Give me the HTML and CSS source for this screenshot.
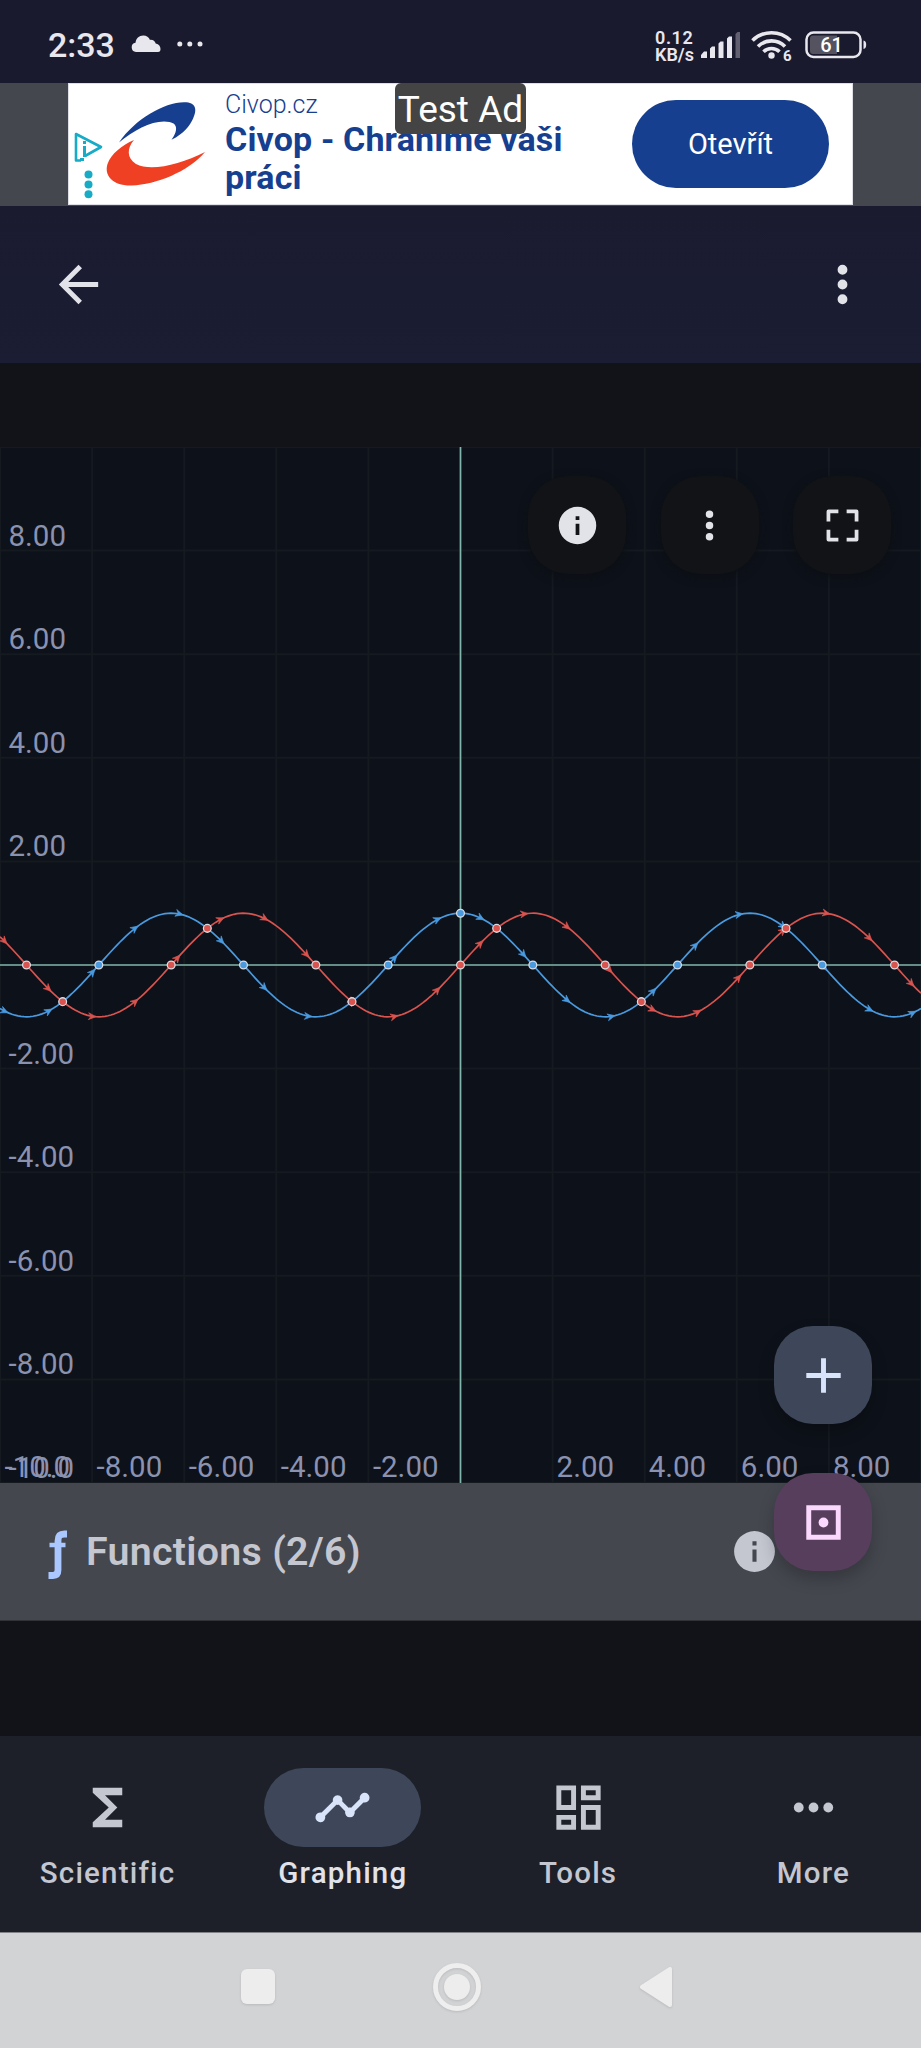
FILE: index.html
```html
<!DOCTYPE html>
<html lang="cs">
<head>
<meta charset="utf-8">
<title>Graphing</title>
<link rel="stylesheet" href="styles.css">
</head>
<body>
<div class="phone">
  <header class="status">
    <div class="status-left">
      <span class="clock">2:33</span>
      <svg class="cloud" width="30" height="18" viewBox="0 0 30 18"><path d="M5 17a4.700 4.700 0 0 1-.5-9.300C5 3.500 8 .5 12.300.5c3.300 0 5.500 1.600 6.700 4.400 3-.3 5 1.200 5.700 3.600C28 9 29.500 11.500 29.500 14c0 2-.7 3-2.500 3z" fill="#e9e7ee"/></svg>
      <svg class="more-dots" width="26" height="6" viewBox="0 0 26 6" fill="#e9e7ee"><circle cx="2.800" cy="3" r="2.500"/><circle cx="12.800" cy="3" r="2.500"/><circle cx="23" cy="3" r="2.500"/></svg>
    </div>
    <div class="status-right">
      <div class="speed"><span class="speed-value">0.12</span><span>KB/s</span></div>
      <svg class="signal" width="40" height="26" viewBox="0 0 40 26" fill="#e9e7ee"><path d="M0 26v-3l3-3.500h3V26zM9 26V16.500l2-2h3V26zM17.500 26V11.500l2-2h3V26zM26 26V6.500l2-2h3V26z"/><path d="M34.500 26V2l2-2h2.500v26z" fill="#626070"/></svg>
      <svg class="wifi" width="42" height="34" viewBox="0 0 42 34" fill="none" stroke="#e9e7ee" stroke-width="3.600"><path d="M1.500 11.500a27 27 0 0 1 38 0M7 17.500a19 19 0 0 1 27 0M12.500 22.800a11.500 11.500 0 0 1 16 0"/><circle cx="20.500" cy="26.500" r="3.200" fill="#e9e7ee" stroke="none"/><text class="wifi-gen" x="32" y="31.500">6</text></svg>
      <svg class="battery" width="62" height="28" viewBox="0 0 62 28"><rect x="1.500" y="1.500" width="54" height="24.500" rx="7" fill="none" stroke="#e9e7ee" stroke-width="2.500"/><path d="M8 4.500h24v18.500H8q-3 0-3-3V7.500q0-3 3-3z" fill="#55535f"/><path d="M58.500 9.500q2.700.5 2.700 4.200t-2.700 4.200z" fill="#e9e7ee"/><text class="battery-text" x="26.500" y="20.500">61</text></svg>
    </div>
  </header>

  <section class="ad-strip">
    <div class="ad">
      <svg class="ad-art" width="150" height="121" viewBox="0 0 150 121">
        <path d="M13 76.500H8V50L33 63 17 72" fill="none" stroke="#17abc6" stroke-width="2.600" stroke-linejoin="round"/>
        <path d="M16.500 62v11M16.500 57v3M12 75.500h4" stroke="#17abc6" stroke-width="3"/>
        <g fill="#17abc6"><circle cx="20.500" cy="90.500" r="4"/><circle cx="20.500" cy="100.500" r="4"/><circle cx="20.500" cy="110.300" r="4"/></g>
        <path d="M51 58.500C67 35 96 18.500 116 18.200c12-.2 13.500 7 9 16.500-3 6.500-9 15-21.500 21 6-8 7-16-2-17.700C87 35 67 45 51 58.500z" fill="#173f90"/>
        <path d="M66 56c-7 8-7.500 18 2 24 15 8 44 .5 69-12-17 20-49 32.500-73 33.500C44 102 36 91 39.500 80 43 70 54 61 66 56z" fill="#f04023"/>
      </svg>
      <div class="ad-copy"><div class="ad-site">Civop.cz</div><div class="ad-title">Civop - Chráníme vaši<br>práci</div></div>
      <div class="ad-button">Otevřít</div>
      <div class="test-label">Test Ad</div>
    </div>
  </section>

  <nav class="appbar">
    <svg width="59" height="59" viewBox="0 0 24 24" fill="#e2e2e9"><path d="M20 11H7.830l5.590-5.590L12 4l-8 8 8 8 1.410-1.410L7.830 13H20z"/></svg>
    <svg width="59" height="59" viewBox="0 0 24 24" fill="#e2e2e9"><path d="M12 8a2 2 0 1 0 0-4 2 2 0 0 0 0 4zm0 2a2 2 0 1 0 0 4 2 2 0 0 0 0-4zm0 6a2 2 0 1 0 0 4 2 2 0 0 0 0-4z"/></svg>
  </nav>

  <main class="content">
    <section class="plot-area">
      <svg id="plot" class="plot" width="921" height="1036" viewBox="0 0 921 1036"></svg>
      <div class="plot-tools">
        <div class="tool"><svg width="45" height="45" viewBox="0 0 24 24" fill="#e2e2e9"><path d="M12 2a10 10 0 1 0 0 20 10 10 0 0 0 0-20zm1 15h-2v-6h2zm0-8h-2V7h2z"/></svg></div>
        <div class="tool"><svg width="45" height="45" viewBox="0 0 24 24" fill="#e2e2e9"><path d="M12 8a2 2 0 1 0 0-4 2 2 0 0 0 0 4zm0 2a2 2 0 1 0 0 4 2 2 0 0 0 0-4zm0 6a2 2 0 1 0 0 4 2 2 0 0 0 0-4z"/></svg></div>
        <div class="tool"><svg width="45" height="45" viewBox="0 0 24 24" fill="none" stroke="#e2e2e9" stroke-width="2" stroke-linejoin="round"><path d="M4.500 9.800V4.500h5.300M14.200 4.500h5.300v5.300M19.500 14.200v5.300h-5.300M9.800 19.500H4.500v-5.300"/></svg></div>
      </div>
    </section>
    <section class="functions">
      <svg class="fx" width="20" height="50" viewBox="0 0 20 50" fill="none" stroke="#aac7ff"><path d="M19 4h-2.500C11.500 4 10 6.500 10 11v29q0 5.500-5 5.500H.5" stroke-width="6.800"/><path d="M1.500 15h16" stroke-width="4.500"/></svg>
      <span class="functions-title">Functions (2/6)</span>
      <svg class="functions-info" width="49" height="49" viewBox="0 0 24 24" fill="#c4c6d0"><path d="M12 2a10 10 0 1 0 0 20 10 10 0 0 0 0-20zm1 15h-2v-6h2zm0-8h-2V7h2z"/></svg>
    </section>
    <div class="fabs">
      <div class="fab fab-add"><svg width="59" height="59" viewBox="0 0 24 24" fill="#d9e3f9"><path d="M19 13h-6v6h-2v-6H5v-2h6V5h2v6h6z"/></svg></div>
      <div class="fab fab-center"><svg width="59" height="59" viewBox="0 0 24 24"><path d="M6 6h12v12H6z" fill="none" stroke="#fad8fd" stroke-width="2"/><circle cx="12" cy="12" r="2" fill="#fad8fd"/></svg></div>
    </div>
  </main>

  <nav class="tabs">
    <div class="tab"><div class="pill"><svg width="59" height="59" viewBox="0 0 24 24" fill="#c4c6d0"><path d="M18 4H6v2l6.500 6L6 18v2h12v-3h-7l5-5-5-5h7z"/></svg></div><span>Scientific</span></div>
    <div class="tab active"><div class="pill"><svg width="59" height="59" viewBox="0 0 24 24" fill="#d9e3f9"><path d="M23 8a2 2 0 0 1-2.490 1.930l-3.560 3.550A2 2 0 1 1 13.080 13.480l-2.560-2.560c-.32.090-.7.090-1.020 0l-4.570 4.560A2 2 0 1 1 3.510 14.070l4.560-4.550A2 2 0 1 1 11.930 9.520l2.560 2.550c.32-.09.700-.09 1.020 0l3.550-3.560A2 2 0 1 1 23 8z"/></svg></div><span>Graphing</span></div>
    <div class="tab"><div class="pill"><svg width="59" height="59" viewBox="0 0 24 24" fill="#c4c6d0"><path d="M19 5v2h-4V5h4M9 5v6H5V5h4m10 8v6h-4v-6h4M9 17v2H5v-2h4M21 3h-8v6h8V3zM11 3H3v10h8V3zm10 8h-8v10h8V11zm-10 4H3v6h8v-6z"/></svg></div><span>Tools</span></div>
    <div class="tab"><div class="pill"><svg width="59" height="59" viewBox="0 0 24 24" fill="#c4c6d0"><circle cx="6" cy="12" r="2"/><circle cx="12" cy="12" r="2"/><circle cx="18" cy="12" r="2"/></svg></div><span>More</span></div>
  </nav>

  <footer class="system">
    <svg width="36" height="37" viewBox="0 0 36 37"><rect x="1" y="1" width="34" height="35" rx="6" fill="#ededed"/></svg>
    <svg width="48" height="48" viewBox="0 0 48 48"><circle cx="24" cy="24" r="21.500" fill="none" stroke="#eeeeee" stroke-width="5"/><circle cx="24" cy="24" r="13" fill="#ededed"/></svg>
    <svg width="34" height="42" viewBox="0 0 34 42"><path d="M31 3v36L3 21z" fill="#ededed" stroke="#ededed" stroke-width="4" stroke-linejoin="round"/></svg>
  </footer>
</div>
<script src="plot.js"></script>
</body>
</html>
```
FILE: styles.css
```css
* { box-sizing: border-box; }
body { margin: 0; background: #111318; font-family: Roboto, "Noto Sans", sans-serif; }
svg { display: block; flex: none; }
.phone { width: 921px; height: 2048px; display: flex; flex-direction: column; overflow: hidden; }

.status { height: 83px; background: #1a1a2e; color: #e9e7ee; display: flex; justify-content: space-between; padding: 0 54px 0 48px; }
.status-left, .status-right { display: flex; align-items: flex-start; }
.clock { font-size: 34px; line-height: 40px; font-weight: 500; margin-top: 25px; width: 66px; white-space: nowrap; }
.cloud { margin: 35px 0 0 17px; }
.more-dots { margin: 41px 0 0 16px; }
.speed { display: flex; flex-direction: column; font-size: 18px; line-height: 17px; font-weight: 600; width: 41px; margin-top: 29px; white-space: nowrap; }
.speed-value { letter-spacing: .6px; }
.signal { margin: 32px 0 0 5px; }
.wifi { margin: 29px 0 0 10px; }
.battery { margin: 31px 0 0 12px; }
.wifi-gen { font-size: 15px; font-weight: 700; fill: #e9e7ee; stroke: #1a1a2e; stroke-width: 3px; paint-order: stroke; }
.battery-text { font-size: 20px; font-weight: 500; fill: #fff; text-anchor: middle; }

.ad-strip { height: 123px; background: #44474e; display: flex; justify-content: center; }
.ad { position: relative; width: 785px; height: 122px; background: #fff; border: 1px solid #dedfe6; display: flex; padding-right: 23px; color: #173f90; }
.ad-art { margin-left: -1px; }
.ad-copy { margin-left: 7px; width: 400px; }
.ad-site { font-size: 25px; font-weight: 300; line-height: 30px; margin-top: 6px; }
.ad-title { font-size: 34px; font-weight: 700; line-height: 38px; letter-spacing: .15px; white-space: nowrap; }
.ad-button { width: 197px; height: 88px; margin: 16px 0 0 auto; border-radius: 44px; background: #173f90; color: #fff; font-size: 29px; display: flex; align-items: center; justify-content: center; }
.test-label { position: absolute; left: 326px; top: -1px; width: 131px; height: 51px; border-radius: 6px; background: #444; color: #fff; font-size: 37px; line-height: 53px; text-align: center; white-space: nowrap; }

.appbar { height: 157px; background: linear-gradient(#1b1b30, #1a1d33); display: flex; align-items: center; justify-content: space-between; padding: 0 49px; }

.content { position: relative; height: 1373px; padding-top: 84px; background: #111318; }
.plot-area { position: relative; height: 1036px; background: #0d1119; }
.plot .grid { stroke: #151a21; stroke-width: 2; }
.plot .axis { stroke: #80b5ab; stroke-width: 1.700; }
.plot .label { fill: #8a92b0; font-size: 29.500px; }
.plot .curve { fill: none; stroke-width: 1.700; }
.plot .dot { stroke: #d8dbe2; stroke-width: 1.300; }
.plot-tools { position: absolute; top: 29px; right: 30px; display: flex; gap: 34.500px; }
.tool { width: 98px; height: 98px; border-radius: 40px; background: #111317; box-shadow: 0 3px 10px #0c0f15; display: flex; align-items: center; justify-content: center; }
.functions { height: 138px; background: #44474e; display: flex; align-items: center; padding: 0 142px 0 48px; border-bottom: 1px solid #303238; }
.fx { margin-top: 7px; }
.functions-title { color: #c4c6d0; font-size: 39.300px; font-weight: 600; letter-spacing: .3px; margin-left: 18px; white-space: nowrap; }
.functions-info { margin-left: auto; }
.fabs { position: absolute; right: 49px; top: 963px; display: flex; flex-direction: column; gap: 49px; }
.fab { width: 98px; height: 98px; border-radius: 39px; display: flex; align-items: center; justify-content: center; box-shadow: 0 8px 16px rgba(0, 0, 0, .22); }
.fab-add { background: #3e4759; }
.fab-center { background: #573e5c; }

.tabs { height: 196px; background: #1d2029; display: grid; grid-template-columns: repeat(4, 216px); column-gap: 19.300px; padding-left: -1px; justify-content: center; }
.tab { display: flex; flex-direction: column; align-items: center; padding-top: 32px; color: #c4c6d0; font-size: 29.500px; font-weight: 500; letter-spacing: 1.200px; }
.tab span { margin-top: 8px; line-height: 36px; }
.pill { width: 157px; height: 79px; border-radius: 40px; display: flex; align-items: center; justify-content: center; }
.active { color: #e2e2e9; }
.active .pill { background: #3e4759; }

.system { height: 116px; background: #d2d3d5; border-top: 1px solid #808287; display: flex; align-items: center; padding: 0 0 8px 240px; }
.system svg { filter: drop-shadow(0 1px 1px #b9babc); }
.system svg:nth-child(2) { margin-left: 157px; }
.system svg:nth-child(3) { margin-left: 158px; }
```
FILE: plot.js
```js
const NS = 'http://www.w3.org/2000/svg';
const plot = document.getElementById('plot');
const UX = 46.05, UY = 51.8, CX = 460.5, CY = 518;
const px = x => CX + x * UX;
const py = y => CY - y * UY;

function add(tag, attrs, text) {
  const el = document.createElementNS(NS, tag);
  for (const k in attrs) el.setAttribute(k, attrs[k]);
  if (text) el.textContent = text;
  plot.appendChild(el);
}

for (let v = -10; v <= 10; v += 2) {
  add('line', { class: 'grid', x1: px(v), x2: px(v), y1: 0, y2: 1036 });
  add('line', { class: 'grid', y1: py(v), y2: py(v), x1: 0, x2: 921 });
}
add('line', { class: 'axis', x1: 0, x2: 921, y1: CY, y2: CY });
add('line', { class: 'axis', x1: CX, x2: CX, y1: 0, y2: 1036 });

for (let v = -10; v < 10; v += 2) {
  if (v === 0) continue;
  const label = v === -10 ? '-10.0' : v.toFixed(2);
  add('text', { class: 'label', x: px(v) + (v < 0 ? 4.5 : 4), y: 1030 }, label);
  add('text', { class: 'label', x: v < 0 ? 8.5 : 8.5, y: py(v) - 5 }, label);
}

const RED = '#d9534f', BLUE = '#4a9ae0';
const curves = [
  { fn: Math.sin, df: Math.cos, color: RED,
    tips: [7, 51, 96, 138, 180, 224, 268, 309, 355, 398, 440, 483, 528, 570, 612, 656, 701, 741, 786, 830, 872, 914] },
  { fn: Math.cos, df: x => -Math.sin(x), color: BLUE,
    tips: [8, 52, 95, 138, 183, 224, 267, 312, 355, 397, 441, 484, 526, 570, 615, 656, 698, 743, 786, 827, 873, 916] }
];
for (const c of curves) {
  let d = '';
  for (let sx = 0; sx <= 921; sx += 3) {
    d += (sx ? 'L' : 'M') + sx + ' ' + py(c.fn((sx - CX) / UX)).toFixed(2);
  }
  add('path', { class: 'curve', d, stroke: c.color });
  for (const t of c.tips) {
    const x = (t - CX) / UX;
    const angle = Math.atan2(-c.df(x) * UY, UX) * 180 / Math.PI;
    add('path', { d: 'M0 0L-7.500 3.500L-5 0L-7.500 -3.500Z', fill: c.color, stroke: c.color, 'stroke-width': .6,
      transform: `translate(${t} ${py(c.fn(x))}) rotate(${angle})` });
  }
}

function dot(x, y, fill) {
  add('circle', { class: 'dot', cx: px(x), cy: py(y), r: 3.9, fill });
}
for (let k = -3; k <= 3; k++) {
  dot(k * Math.PI, 0, RED);
  if (k < 3) {
    dot((k + .5) * Math.PI, 0, BLUE);
    const q = (k + .25) * Math.PI;
    dot(q, Math.sin(q), RED);
  }
}
dot(0, 1, BLUE);
```
